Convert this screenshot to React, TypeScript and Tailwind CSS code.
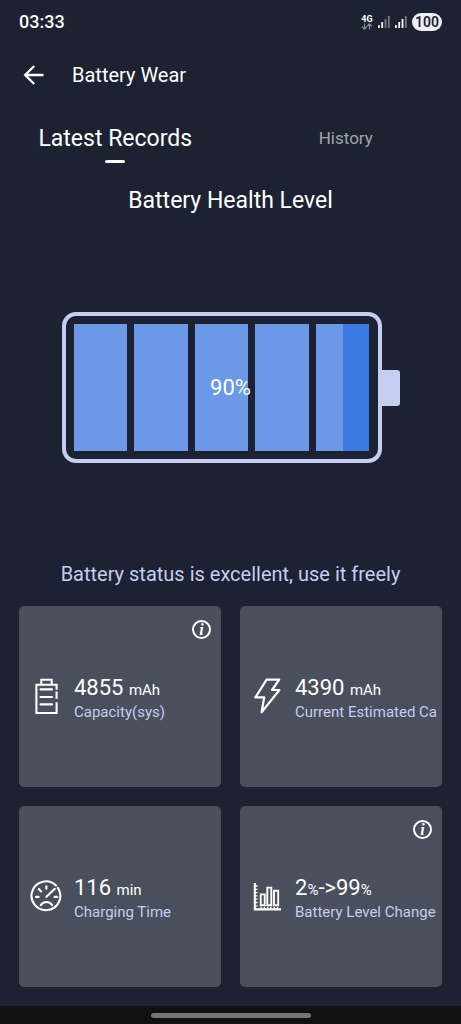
import React, { useState } from 'react';

const BATTERY_LEVEL = 90;
const SEGMENTS = [0, 1, 2, 3, 4];
const TABS = ['Latest Records', 'History'];

const CapacityIcon = () => (
  <svg viewBox="0 1 32 36" className="w-8 h-9 shrink-0 overflow-visible" fill="none" stroke="currentColor" strokeWidth="2.1" aria-hidden="true">
    <path d="M26.6 11.8V6.7H6.4V35H26.6V24.3" />
    <path d="M26.6 13.6V20.8" />
    <path d="M11.3 6.5V1.8H21.7V6.5" />
    <path d="M10.5 11.4H22M10.5 19H22M10.5 26.4H22" strokeLinecap="round" />
  </svg>
);

const BoltIcon = () => (
  <svg viewBox="0 1 32 36" className="w-8 h-9 shrink-0 overflow-visible" fill="none" stroke="currentColor" strokeWidth="2.2" strokeLinejoin="round" aria-hidden="true">
    <path d="M15.6 1.6H28.2L21 12H28.4L10.6 34.2L13.2 19.4H4.4Z" />
  </svg>
);

const GaugeIcon = () => (
  <svg viewBox="0 1 32 36" className="w-8 h-9 shrink-0" fill="none" stroke="currentColor" strokeWidth="2.1" strokeLinecap="round" aria-hidden="true">
    <path d="M26 7.5A14.4 14.4 0 1 0 27.9 9.8" />
    <path d="M16.4 18.8L24.8 10.8" />
    <path d="M16.4 8.2V10.8M8.8 11L11.2 13.4M6 18.9H8.6M24.6 18.9H27.2" />
    <path d="M10.8 27.2C13.2 23 19.8 23 22.2 27.2" />
  </svg>
);

const ChartIcon = () => (
  <svg viewBox="0 1 32 36" className="w-8 h-9 shrink-0" fill="none" stroke="currentColor" aria-hidden="true">
    <path d="M3.8 5V31.4H30" strokeWidth="2.1" />
    <path d="M4 8H6.6M4 11.3H6.6M4 14.6H6.6M4 17.9H6.6M4 21.2H6.6M4 24.5H6.6M4 27.8H6.6" strokeWidth="1.3" />
    <path d="M10 31V28.8M13.3 31V28.8M16.6 31V28.8M19.9 31V28.8M23.2 31V28.8M26.5 31V28.8" strokeWidth="1.3" />
    <path d="M9.7 16.4H13.7V27.2H9.7ZM16.3 9.6H20.3V27.2H16.3ZM23 12.8H27.2V27.2H23Z" strokeWidth="1.9" />
  </svg>
);

const SignalIcon = ({ level }: { level: number }) => (
  <svg viewBox="0 0 12 12" className="size-3" fill="currentColor" aria-hidden="true">
    {[0, 1, 2, 3].map((i) => (
      <rect key={i} x={i * 3.3} y={9 - i * 3} width="1.8" height={3 + i * 3} rx="0.6" opacity={i < level ? 1 : 0.4} />
    ))}
  </svg>
);

const StatusBar = () => (
  <div className="h-11 px-[19px] flex items-center justify-between">
    <span className="text-[18px] leading-5 font-medium">03:33</span>
    <div className="flex items-center gap-[5px]">
      <div className="flex flex-col items-center">
        <span className="text-[9px] leading-2 font-bold">4G</span>
        <svg viewBox="0 0 12 7" className="w-3 h-[7px] opacity-50" fill="none" stroke="currentColor" strokeWidth="1.1" aria-hidden="true">
          <path d="M3.5 0.5V6M1 3.6L3.5 6.1L6 3.6M8.5 6.5V1M6 3.4L8.5 0.9L11 3.4" />
        </svg>
      </div>
      <SignalIcon level={2} />
      <SignalIcon level={3} />
      <span className="h-[18px] px-[3px] rounded-full bg-[#eef0f6] text-[#1c2231] text-[14px] leading-[18px] font-semibold">100</span>
    </div>
  </div>
);

const BatteryGauge = ({ level }: { level: number }) => (
  <div className="relative w-full max-w-[338px] flex items-center">
    <div className="flex-1 h-[151px] p-2 flex gap-[7px] border-4 border-[#c5cdf0] rounded-[14px]">
      {SEGMENTS.map((i) => (
        <div key={i} className="flex-1 bg-[#3b7ae3]">
          <div
            className="h-full bg-[#6b99e8]"
            style={{ width: `${Math.min(100, Math.max(0, (level - i * 20) * 5))}%` }}
          />
        </div>
      ))}
    </div>
    <div className="w-[18px] h-9 bg-[#c5cdf0] rounded-r-[3px]" />
    <span className="absolute inset-0 flex items-center justify-center text-[22px]">{level}%</span>
  </div>
);

interface StatCardProps {
  icon: React.ReactNode;
  label: string;
  info?: boolean;
  children: React.ReactNode;
}

const StatCard = ({ icon, label, info, children }: StatCardProps) => (
  <div className="relative h-[181px] pl-[11px] flex items-center gap-3 overflow-hidden rounded-[5px] bg-[#4a4f5d]">
    {icon}
    <div className="min-w-0 pt-1 whitespace-nowrap">
      <p className="text-[22px] leading-6">{children}</p>
      <p className="text-[15px] leading-5 text-[#c5cdf0]">{label}</p>
    </div>
    {info && (
      <button
        type="button"
        aria-label={`About ${label}`}
        className="absolute top-3.5 right-2.5 size-[19px] flex items-center justify-center border-2 border-white rounded-full font-['Liberation_Serif',serif] text-[16px] leading-4 font-bold italic"
      >
        i
      </button>
    )}
  </div>
);

const Unit = ({ children }: { children: React.ReactNode }) => (
  <span className="text-[15px]">{children}</span>
);

const App: React.FC = () => {
  const [activeTab, setActiveTab] = useState(0);

  return (
    <div className="min-h-screen w-full flex flex-col bg-[#1c2231] text-white font-[Roboto,sans-serif]">
      <StatusBar />

      <header className="h-[62px] px-5 flex items-center gap-6">
        <button type="button" aria-label="Back" className="size-7">
          <svg viewBox="0 0 28 28" className="size-7" fill="none" stroke="currentColor" strokeWidth="2.3" aria-hidden="true">
            <path d="M23.5 14H5.5M14.2 5L5.2 14L14.2 23" />
          </svg>
        </button>
        <h1 className="text-[20px] leading-6">Battery Wear</h1>
      </header>

      {/* Tabs */}
      <nav className="h-20 pt-[18px] grid grid-cols-2">
        {TABS.map((tab, i) => (
          <button key={tab} type="button" onClick={() => setActiveTab(i)} className="flex flex-col items-center gap-1.5">
            <span className={activeTab === i ? 'text-[23px] leading-[30px]' : 'text-[17px] leading-7 text-[#a0a4ae]'}>
              {tab}
            </span>
            {activeTab === i && <span className="w-5 h-[3px] rounded-full bg-white" />}
          </button>
        ))}
      </nav>

      <main className="flex-1 flex flex-col">
        <h2 className="text-center text-[23px] leading-[30px]">Battery Health Level</h2>

        <div className="flex-1 px-[19px] py-6 flex items-center justify-center">
          <BatteryGauge level={BATTERY_LEVEL} />
        </div>

        <p className="text-center text-[20px] leading-[30px] text-[#c5cdf0]">Battery status is excellent, use it freely</p>

        {/* Stats */}
        <section className="pt-[17px] px-[19px] pb-[19px] grid grid-cols-2 gap-[19px]">
          <StatCard icon={<CapacityIcon />} label="Capacity(sys)" info>
            4855 <Unit>mAh</Unit>
          </StatCard>
          <StatCard icon={<BoltIcon />} label="Current Estimated Ca">
            4390 <Unit>mAh</Unit>
          </StatCard>
          <StatCard icon={<GaugeIcon />} label="Charging Time">
            116 <Unit>min</Unit>
          </StatCard>
          <StatCard icon={<ChartIcon />} label="Battery Level Change" info>
            2<Unit>%</Unit>-&gt;99<Unit>%</Unit>
          </StatCard>
        </section>
      </main>

      {/* Gesture bar */}
      <div className="h-[18px] flex items-center justify-center bg-[#111111]">
        <div className="w-40 h-[5px] rounded-full bg-[#757575]" />
      </div>
    </div>
  );
};

export default App;
